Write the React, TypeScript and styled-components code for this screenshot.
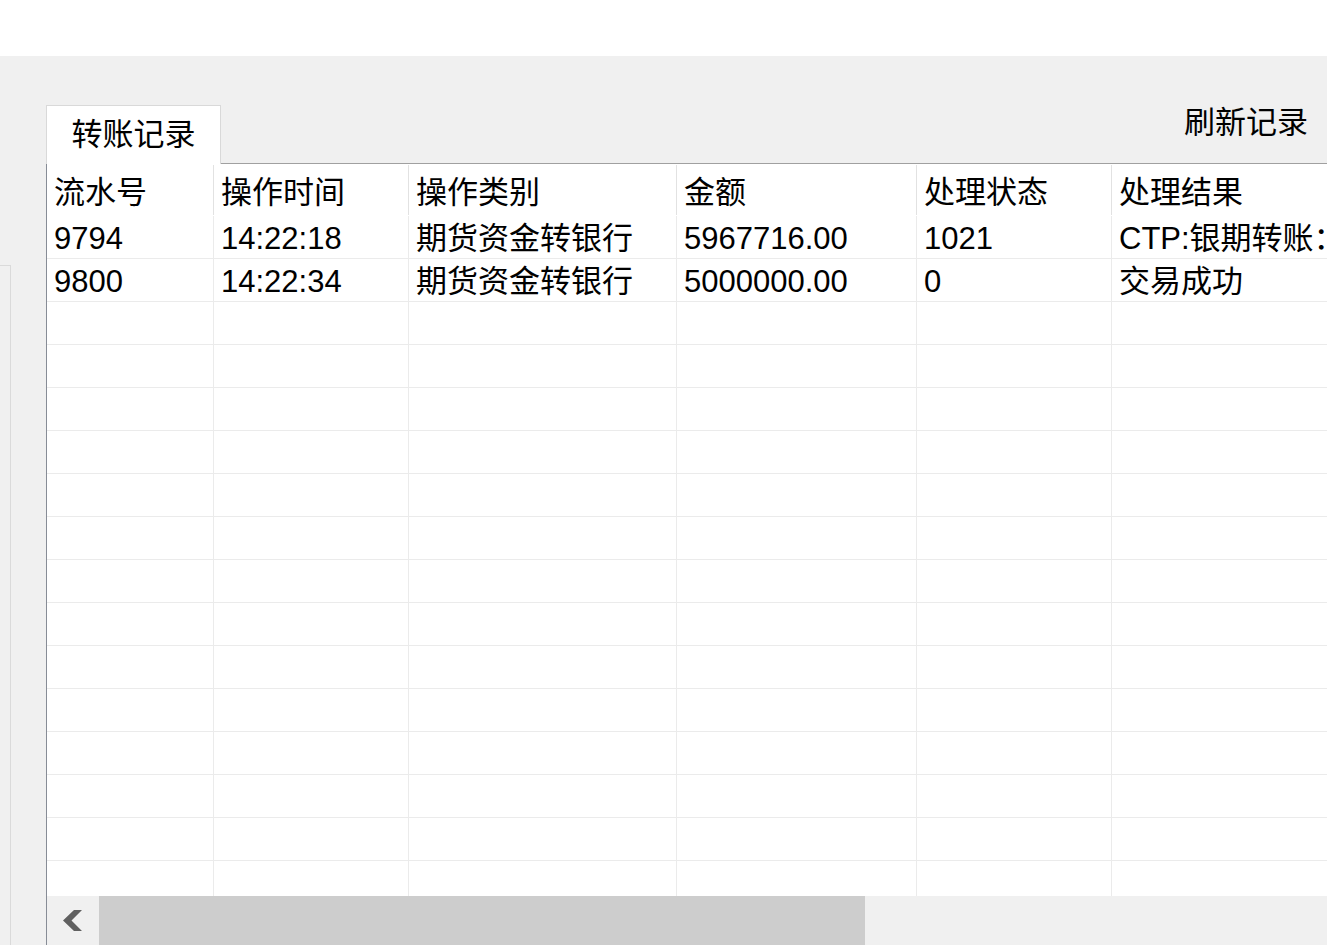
import React from "react";
import styled, { createGlobalStyle } from "styled-components";

const GlobalStyle = createGlobalStyle`
  html, body {
    margin: 0;
    padding: 0;
    background: #f0f0f0;
    overflow: hidden;
  }
  * { box-sizing: border-box; }
`;

const CJK = `"Noto Sans CJK SC", "Noto Sans", sans-serif`;
const MIXED = `"Liberation Sans", "Noto Sans CJK SC", sans-serif`;

const Page = styled.div`
  height: 100vh;
  display: flex;
  flex-direction: column;
  overflow: hidden;
  font-family: ${CJK};
  color: #000;
`;

const TopBar = styled.div`
  height: 56px;
  flex: none;
  background: #ffffff;
`;

const Workspace = styled.div`
  flex: 1;
  min-height: 0;
  display: flex;
  background: #f0f0f0;
`;

const SideColumn = styled.div`
  width: 46px;
  flex: none;
  display: flex;
  flex-direction: column;
  padding-top: 209px;
`;

const SideBox = styled.div`
  width: 11px;
  flex: 1;
  border-top: 1px solid #dadada;
  border-right: 1px solid #dadada;
`;

const Main = styled.div`
  flex: 1;
  min-width: 0;
  display: flex;
  flex-direction: column;
  padding-top: 49px;
`;

const TabRow = styled.div`
  display: flex;
  height: 59px;
  flex: none;
`;

const Tab = styled.div`
  width: 175px;
  flex: none;
  height: 59px;
  background: #ffffff;
  border: 1px solid #d9d9d9;
  border-bottom: none;
  display: flex;
  align-items: center;
  justify-content: center;
  font-size: 31px;
  line-height: 1;
  padding-bottom: 8px;
`;

const TabFiller = styled.div`
  flex: 1;
  display: flex;
  justify-content: flex-end;
  align-items: flex-start;
  border-bottom: 1px solid #a0a0a0;
  padding-right: 19px;
`;

const RefreshButton = styled.button`
  font-family: ${CJK};
  font-size: 31px;
  line-height: 30px;
  height: 30px;
  padding: 0;
  margin: 0;
  border: none;
  background: transparent;
  color: #000;
  cursor: pointer;
`;

const Panel = styled.div`
  flex: 1;
  min-height: 0;
  display: flex;
  flex-direction: column;
  background: #ffffff;
  border-left: 1px solid #878c96;
  overflow: hidden;
`;

const COLS = "167px 195px 268px 240px 195px 320px";

const HeaderRow = styled.div`
  display: grid;
  grid-template-columns: ${COLS};
  height: 52px;
  flex: none;
`;

const HeaderCell = styled.div`
  border-right: 1px solid #e2e2e2;
  margin: 1px 0 1px;
  font-family: ${CJK};
  font-size: 31px;
  line-height: 50px;
  padding-left: 7px;
  white-space: nowrap;
  overflow: hidden;
`;

const Body = styled.div`
  flex: 1;
  min-height: 0;
  overflow: hidden;
`;

const Row = styled.div`
  display: grid;
  grid-template-columns: ${COLS};
  height: 43px;
  border-bottom: 1px solid #ebebeb;
`;

const Cell = styled.div`
  border-right: 1px solid #ebebeb;
  font-family: ${MIXED};
  font-size: 31px;
  line-height: 38px;
  padding: 4px 0 0 7px;
  white-space: nowrap;
  overflow: hidden;
`;

const ScrollBar = styled.div`
  height: 49px;
  flex: none;
  display: flex;
  background: #f0f0f0;
`;

const ArrowButton = styled.div`
  width: 52px;
  flex: none;
  display: flex;
  align-items: center;
  justify-content: center;
`;

const Thumb = styled.div<{ $width: number }>`
  width: ${(p) => p.$width}px;
  flex: none;
  background: #cdcdcd;
`;

const Track = styled.div`
  flex: 1;
`;

const headers = ["流水号", "操作时间", "操作类别", "金额", "处理状态", "处理结果"];

const records = [
  ["9794", "14:22:18", "期货资金转银行", "5967716.00", "1021", "CTP:银期转账："],
  ["9800", "14:22:34", "期货资金转银行", "5000000.00", "0", "交易成功"],
];

const EMPTY_ROWS = 15;

export default function App() {
  const rows = [
    ...records,
    ...Array.from({ length: EMPTY_ROWS }, () => ["", "", "", "", "", ""]),
  ];
  return (
    <>
      <GlobalStyle />
      <Page>
        <TopBar />
        <Workspace>
          <SideColumn>
            <SideBox />
          </SideColumn>
          <Main>
            <TabRow>
              <Tab>转账记录</Tab>
              <TabFiller>
                <RefreshButton>刷新记录</RefreshButton>
              </TabFiller>
            </TabRow>
            <Panel>
              <HeaderRow>
                {headers.map((h) => (
                  <HeaderCell key={h}>{h}</HeaderCell>
                ))}
              </HeaderRow>
              <Body>
                {rows.map((r, i) => (
                  <Row key={i}>
                    {r.map((c, j) => (
                      <Cell key={j}>{c}</Cell>
                    ))}
                  </Row>
                ))}
              </Body>
              <ScrollBar>
                <ArrowButton>
                  <svg width="52" height="49" viewBox="0 0 52 49">
                    <polygon
                      points="27,14 35,14 24.5,24.5 35,35 27,35 16,24.5"
                      fill="#606060"
                    />
                  </svg>
                </ArrowButton>
                <Thumb $width={766} />
                <Track />
              </ScrollBar>
            </Panel>
          </Main>
        </Workspace>
      </Page>
    </>
  );
}
